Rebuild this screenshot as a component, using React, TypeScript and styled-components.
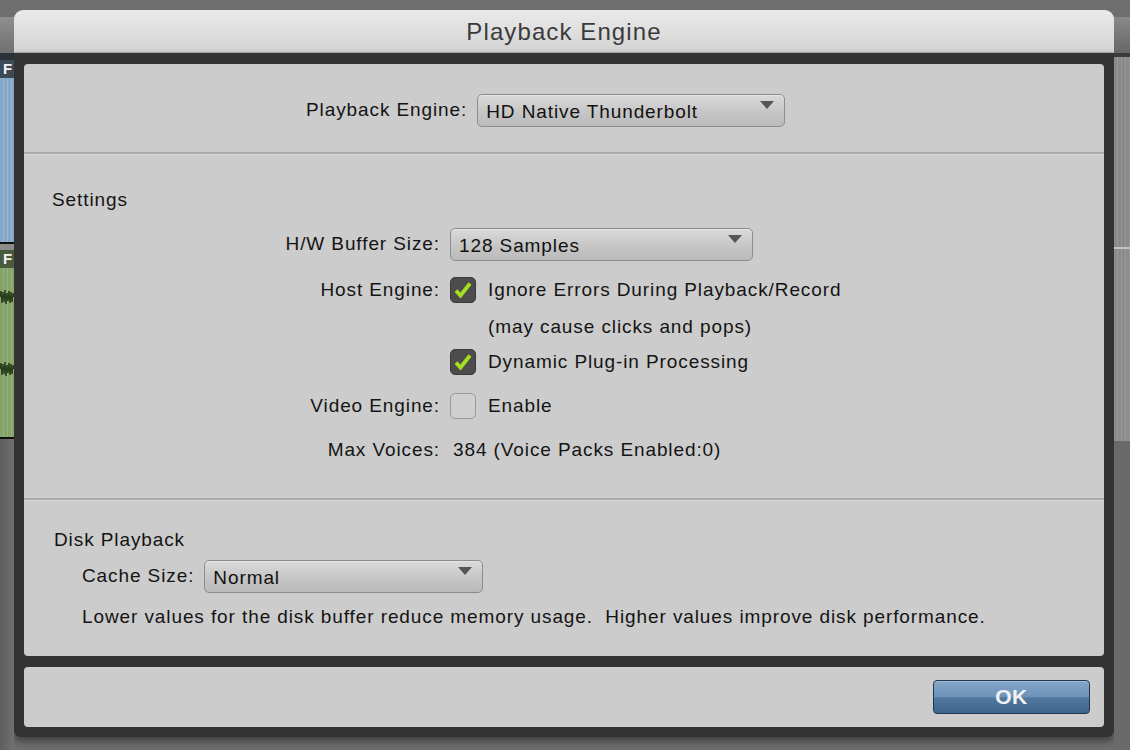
import styled, { createGlobalStyle } from "styled-components";

const GlobalStyle = createGlobalStyle`
  html, body {
    margin: 0;
    padding: 0;
    background: #6e6e6e;
  }
  body {
    font-family: "Liberation Sans", Arial, sans-serif;
    font-size: 19px;
    letter-spacing: 0.9px;
    color: #141414;
  }
`;

const Desktop = styled.div`
  display: grid;
  grid-template-columns: 14px 1100px 16px;
  width: 1130px;
  height: 750px;
  overflow: hidden;
  background: #6e6e6e;
`;

const Strip = styled.div`
  display: flex;
  flex-direction: column;
  padding-top: 17px;
  overflow: hidden;
`;

const StripBlock = styled.div<{ $h?: number; $bg: string }>`
  position: relative;
  height: ${(p) => (p.$h ? `${p.$h}px` : "auto")};
  flex: ${(p) => (p.$h ? "none" : "1")};
  background: ${(p) => p.$bg};
  overflow: hidden;
`;

const TrackTag = styled.span`
  position: absolute;
  left: 3px;
  top: 0;
  font-weight: bold;
  font-size: 15px;
  letter-spacing: 0;
  line-height: 18px;
  color: #f2f2f2;
`;

const Window = styled.div`
  display: flex;
  flex-direction: column;
  margin-top: 10px;
  height: 727px;
`;

const TitleBar = styled.div`
  height: 43px;
  flex: none;
  display: flex;
  align-items: center;
  justify-content: center;
  background: linear-gradient(#eaeaea, #d4d4d4);
  border-radius: 9px 9px 0 0;
  border-bottom: 1px solid #b0b0b0;
  font-family: "Liberation Sans", Arial, sans-serif;
  font-size: 24px;
  letter-spacing: 1.1px;
  color: #3b3b3b;
  padding-top: 2px;
  box-sizing: border-box;
`;

const Frame = styled.div`
  flex: 1;
  min-height: 0;
  display: flex;
  flex-direction: column;
  gap: 11px;
  background: #333333;
  padding: 11px 10px 10px 10px;
  border-radius: 0 0 7px 7px;
  box-shadow: 0 4px 8px rgba(0, 0, 0, 0.45);
`;

const Panel = styled.div`
  flex: 1;
  background: #cccccc;
  border-radius: 4px;
  display: flex;
  flex-direction: column;
`;

const Section = styled.section<{ $pt: number; $pb: number; $pl: number }>`
  padding: ${(p) => `${p.$pt}px 0 ${p.$pb}px ${p.$pl}px`};
  display: flex;
  flex-direction: column;
`;

const Separator = styled.hr`
  margin: 0;
  border: 0;
  height: 2px;
  background: #ababab;
  box-shadow: 0 1px 0 #d8d8d8;
`;

const SectionTitle = styled.div<{ $indent?: number }>`
  line-height: 24px;
  padding-left: ${(p) => p.$indent ?? 0}px;
`;

const FormRow = styled.div<{ $mt?: number; $indent?: number }>`
  display: flex;
  align-items: center;
  height: 34px;
  margin-top: ${(p) => p.$mt ?? 0}px;
  padding-left: ${(p) => p.$indent ?? 0}px;
`;

const Label = styled.span<{ $w?: number }>`
  width: ${(p) => (p.$w ? `${p.$w}px` : "auto")};
  text-align: right;
  flex: none;
  margin-right: 10px;
`;

const Select = styled.div<{ $w: number }>`
  position: relative;
  width: ${(p) => p.$w}px;
  height: 33px;
  box-sizing: border-box;
  border: 1px solid #8c8c8c;
  border-radius: 5px;
  background: linear-gradient(#dadada, #c4c4c4 60%, #bbbbbb);
  box-shadow: inset 0 1px 0 #e6e6e6;
  padding: 5px 0 0 8px;
  line-height: 24px;
  color: #111;

  &::after {
    content: "";
    position: absolute;
    right: 10px;
    top: 6px;
    border-left: 7px solid transparent;
    border-right: 7px solid transparent;
    border-top: 8px solid #555;
  }
`;

const Checkbox = styled.span<{ $on?: boolean }>`
  width: 26px;
  height: 26px;
  box-sizing: border-box;
  flex: none;
  border-radius: 5px;
  border: 1px solid ${(p) => (p.$on ? "#3a3a3a" : "#9a9a9a")};
  background: ${(p) => (p.$on ? "#4c4c4c" : "#cfcfcf")};
  display: flex;
  align-items: center;
  justify-content: center;
  margin-right: 12px;
`;

const Note = styled.span<{ $ml: number }>`
  margin-left: ${(p) => p.$ml}px;
`;

const HelpText = styled.div`
  margin-top: 12px;
  padding-left: 28px;
  line-height: 24px;
`;

const Footer = styled.div`
  height: 60px;
  flex: none;
  background: #cccccc;
  border-radius: 4px;
  display: flex;
  align-items: center;
  justify-content: flex-end;
  padding-right: 14px;
`;

const OkButton = styled.button`
  width: 157px;
  height: 34px;
  border: 1px solid #1f364e;
  border-radius: 4px;
  background: linear-gradient(#84a7c9, #6e93b9 50%, #52799f 52%, #3e638c);
  box-shadow: inset 0 1px 0 rgba(255, 255, 255, 0.25);
  color: #f2f2f2;
  font-family: "Liberation Sans", Arial, sans-serif;
  font-weight: bold;
  font-size: 21px;
  letter-spacing: 0.5px;
  padding: 0;
`;

function Check() {
  return (
    <svg width="22" height="22" viewBox="0 0 22 22">
      <path d="M4 11.5 L8.5 16.5 L18 4.5" fill="none" stroke="#a6dd1f" strokeWidth="3.8" strokeLinejoin="miter" />
    </svg>
  );
}

function Wave() {
  return (
    <svg width="14" height="20" viewBox="0 0 14 20" style={{ position: "absolute", left: 0, top: 0 }}>
      <path d="M0 10 L1 4 L2 16 L3 5 L4 15 L5 3 L6 17 L7 6 L8 14 L9 4 L10 16 L11 5 L12 15 L13 6 L14 10" fill="#243a1a" stroke="#243a1a" strokeWidth="1" />
    </svg>
  );
}

const stripes = (base: string, light: string) =>
  `repeating-linear-gradient(90deg, ${base} 0 3px, ${light} 3px 4px)`;

const GREEN = stripes("#86a46a", "#94b178");

function LeftTracks() {
  return (
    <Strip>
      <StripBlock $h={36} $bg="linear-gradient(#8f8f8f, #6f6f6f)" />
      <StripBlock $h={7} $bg="#2c3138" />
      <StripBlock $h={18} $bg="#3c4a57">
        <TrackTag>F</TrackTag>
      </StripBlock>
      <StripBlock $h={164} $bg={stripes("#86a8c6", "#98b8d2")} />
      <StripBlock $h={2} $bg="#111" />
      <StripBlock $h={6} $bg="#8c8c8c" />
      <StripBlock $h={18} $bg="#4a5a3c">
        <TrackTag>F</TrackTag>
      </StripBlock>
      <StripBlock $h={19} $bg={GREEN} />
      <StripBlock $h={20} $bg={GREEN}>
        <Wave />
      </StripBlock>
      <StripBlock $h={52} $bg={GREEN} />
      <StripBlock $h={20} $bg={GREEN}>
        <Wave />
      </StripBlock>
      <StripBlock $h={58} $bg={GREEN} />
      <StripBlock $h={2} $bg="#111" />
      <StripBlock $bg="linear-gradient(90deg, #5e5e5e, #707070)" />
    </Strip>
  );
}

function RightTracks() {
  return (
    <Strip>
      <StripBlock $h={36} $bg="linear-gradient(#8a8a8a, #666)" />
      <StripBlock $h={4} $bg="#3a3a3a" />
      <StripBlock $h={190} $bg={stripes("#8a8a8a", "#969696")} />
      <StripBlock $h={2} $bg="#c4c4c4" />
      <StripBlock $h={192} $bg={stripes("#8c8c8c", "#989898")} />
      <StripBlock $bg="#6a6a6a" />
    </Strip>
  );
}

export default function App() {
  return (
    <>
      <GlobalStyle />
      <Desktop>
        <LeftTracks />
        <Window>
          <TitleBar>Playback Engine</TitleBar>
          <Frame>
            <Panel>
              <Section $pt={29} $pb={25} $pl={282}>
                <FormRow>
                  <Label>Playback Engine:</Label>
                  <Select $w={308}>HD Native Thunderbolt</Select>
                </FormRow>
              </Section>
              <Separator />
              <Section $pt={34} $pb={31} $pl={0}>
                <SectionTitle $indent={28}>Settings</SectionTitle>
                <FormRow $mt={15}>
                  <Label $w={416}>H/W Buffer Size:</Label>
                  <Select $w={303}>128 Samples</Select>
                </FormRow>
                <FormRow $mt={12}>
                  <Label $w={416}>Host Engine:</Label>
                  <Checkbox $on>
                    <Check />
                  </Checkbox>
                  Ignore Errors During Playback/Record
                </FormRow>
                <FormRow $mt={3}>
                  <Note $ml={464}>(may cause clicks and pops)</Note>
                </FormRow>
                <FormRow $mt={1}>
                  <Label $w={416} />
                  <Checkbox $on>
                    <Check />
                  </Checkbox>
                  Dynamic Plug-in Processing
                </FormRow>
                <FormRow $mt={10}>
                  <Label $w={416}>Video Engine:</Label>
                  <Checkbox />
                  Enable
                </FormRow>
                <FormRow $mt={10}>
                  <Label $w={416}>Max Voices:</Label>
                  <Note $ml={3}>384 (Voice Packs Enabled:0)</Note>
                </FormRow>
              </Section>
              <Separator />
              <Section $pt={28} $pb={25} $pl={30}>
                <SectionTitle>Disk Playback</SectionTitle>
                <FormRow $mt={7} $indent={28}>
                  <Label>Cache Size:</Label>
                  <Select $w={279}>Normal</Select>
                </FormRow>
                <HelpText>
                  Lower values for the disk buffer reduce memory usage.&nbsp; Higher values improve disk
                  performance.
                </HelpText>
              </Section>
            </Panel>
            <Footer>
              <OkButton>OK</OkButton>
            </Footer>
          </Frame>
        </Window>
        <RightTracks />
      </Desktop>
    </>
  );
}
